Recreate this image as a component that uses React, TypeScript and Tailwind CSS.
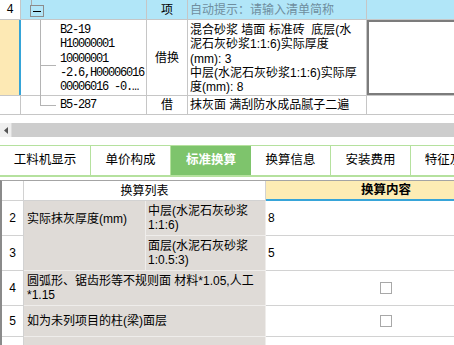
import React from 'react';

const sans = "font-['Liberation_Sans','Noto_Sans_CJK_SC',sans-serif]";
const mono = "font-['Liberation_Mono','Noto_Sans_CJK_SC',monospace]";

const codeLines = ['B2-19', 'H10000001', '10000001', '-2.6,H00006016', '00006016 -0.…'];
const descLines = [
  '混合砂浆 墙面 标准砖  底层(水',
  '泥石灰砂浆1:1:6)实际厚度',
  '(mm): 3',
  '中层(水泥石灰砂浆1:1:6)实际厚',
  '度(mm): 8',
];

function TopGrid() {
  return (
    <div>
      {/* row: 清单 item */}
      <div className="flex h-[20px] border-b border-[#c6c6c6]">
        <div className={`w-[21px] shrink-0 border-r border-[#c6c6c6] flex items-center justify-center ${mono}`}>
          4
        </div>
        <div className="w-[126px] shrink-0 bg-[#b1e6f8] border-r border-[#c6c6c6] relative">
          <span className="absolute left-[10px] top-0 h-[6px] w-px bg-[#a8a8a8]" />
          <span className="absolute left-[9px] top-[5px] w-[14px] h-[12px] border border-[#8c8c8c] flex items-center justify-center">
            <span className="w-[8px] h-px bg-black" />
          </span>
        </div>
        <div className="w-[41px] shrink-0 bg-[#b1e6f8] border-r border-[#c6c6c6] flex items-center justify-center">
          项
        </div>
        <div className="w-[179px] shrink-0 bg-[#b1e6f8] border-r border-[#c6c6c6] flex items-center pl-[2px] text-[#6f8e9e] whitespace-nowrap">
          自动提示：请输入清单简称
        </div>
        <div className="flex-1 bg-[#b1e6f8]" />
      </div>

      {/* row: B2-19 */}
      <div className="flex h-[76px] border-b border-[#c6c6c6]">
        <div className="w-[21px] shrink-0 bg-[#fde9b4] border-r-2 border-[#35a4d8]" />
        <div className="w-[126px] shrink-0 border-r border-[#c6c6c6] relative">
          <span className="absolute left-[19px] top-0 bottom-[-1px] w-px bg-[#b4b4b4]" />
          <span className="absolute left-[19px] top-[45px] w-[16px] h-px bg-[#b4b4b4]" />
          <div className={`pl-[39px] pt-[3px] leading-[14.3px] tracking-[-1.2px] whitespace-nowrap ${mono}`}>
            {codeLines.map((l) => (
              <div key={l}>{l}</div>
            ))}
          </div>
        </div>
        <div className="w-[41px] shrink-0 border-r border-[#c6c6c6] flex items-center justify-center">
          借换
        </div>
        <div className="w-[179px] shrink-0 border-r border-[#c6c6c6] pl-[2px] pt-[3px] leading-[14.3px] whitespace-pre overflow-hidden">
          {descLines.map((l) => (
            <div key={l}>{l}</div>
          ))}
        </div>
        <div className="flex-1 border-2 border-r-0 border-[#7c7c7c]" />
      </div>

      {/* row: B5-287 */}
      <div className="flex h-[19px] border-b border-[#c6c6c6]">
        <div className="w-[21px] shrink-0 border-r border-[#c6c6c6]" />
        <div className="w-[126px] shrink-0 border-r border-[#c6c6c6] relative">
          <span className="absolute left-[19px] top-0 h-[10px] w-px bg-[#b4b4b4]" />
          <span className="absolute left-[19px] top-[9px] w-[16px] h-px bg-[#b4b4b4]" />
          <div className={`pl-[39px] h-full flex items-center tracking-[-1.2px] ${mono}`}>B5-287</div>
        </div>
        <div className="w-[41px] shrink-0 border-r border-[#c6c6c6] flex items-center justify-center">
          借
        </div>
        <div className="w-[179px] shrink-0 border-r border-[#c6c6c6] flex items-center pl-[2px] whitespace-nowrap">
          抹灰面 满刮防水成品腻子二遍
        </div>
        <div className="flex-1" />
      </div>
    </div>
  );
}

function ScrollBar() {
  return (
    <div className="h-[30px] pt-[8px]">
      <div className="flex h-[14px] bg-[#cdcdcd]">
        <div className="w-[12px] bg-[#efefef] border-r border-[#dcdcdc] flex items-center justify-center">
          <svg width="4" height="7" viewBox="0 0 4 7">
            <path d="M4 0 L0 3.5 L4 7 Z" fill="#555" />
          </svg>
        </div>
      </div>
    </div>
  );
}

const tabs = [
  { label: '工料机显示', w: 'w-[91px]', active: false },
  { label: '单价构成', w: 'w-[80px]', active: false },
  { label: '标准换算', w: 'w-[80px]', active: true },
  { label: '换算信息', w: 'w-[80px]', active: false },
  { label: '安装费用', w: 'w-[80px]', active: false },
  { label: '特征及内容', w: 'w-[91px]', active: false },
];

function Tabs() {
  return (
    <div className="flex h-[32px] border-t border-b-2 border-[#b5e19e]">
      {tabs.map((t) => (
        <div
          key={t.label}
          className={`${t.w} shrink-0 flex items-center justify-center text-[12.5px] whitespace-nowrap ${
            t.active ? 'bg-[#7ec46c] text-white font-bold' : 'border-r border-[#b5e19e]'
          }`}
        >
          {t.label}
        </div>
      ))}
    </div>
  );
}

function Checkbox() {
  return <span className="w-[12px] h-[12px] border border-[#a8a8a8] bg-white" />;
}

function ConvertTable() {
  const num = 'border-r border-b border-[#d2d2d2] flex items-center justify-center';
  const gray = 'bg-[#dfdbd7] border-r border-b border-[#efedeb]';
  const val = 'border-b border-[#d2d2d2] flex items-center';
  return (
    <div className="grid grid-cols-[22px_122px_120px_240px] grid-rows-[20px_35px_35px_35px_31px_30px] border-t border-l-2 border-t-[#a4a4a4] border-l-[#8a8a8a]">
      {/* header */}
      <div className={num} />
      <div className="col-span-2 border-r border-b border-[#d2d2d2] flex items-center justify-center">换算列表</div>
      <div className="bg-[#fdecb4] border-b-2 border-[#37a5d9] flex items-center justify-center font-bold text-[12.5px]">
        换算内容
      </div>

      {/* 2 */}
      <div className={num}>2</div>
      <div className={`${gray} row-span-2 pl-[3px] pt-[9px] whitespace-nowrap`}>实际抹灰厚度(mm)</div>
      <div className={`${gray} flex items-center pl-[2px] leading-[14px] whitespace-nowrap`}>
        <div>
          中层(水泥石灰砂浆
          <br />
          1:1:6)
        </div>
      </div>
      <div className={`${val} pl-[2px]`}>8</div>

      {/* 3 */}
      <div className={num}>3</div>
      <div className={`${gray} flex items-center pl-[2px] leading-[14px] whitespace-nowrap`}>
        <div>
          面层(水泥石灰砂浆
          <br />
          1:0.5:3)
        </div>
      </div>
      <div className={`${val} pl-[2px]`}>5</div>

      {/* 4 */}
      <div className={num}>4</div>
      <div className={`${gray} col-span-2 flex items-center pl-[3px] leading-[14px] whitespace-nowrap`}>
        <div>
          圆弧形、锯齿形等不规则面 材料*1.05,人工
          <br />
          *1.15
        </div>
      </div>
      <div className={`${val} justify-center`}>
        <Checkbox />
      </div>

      {/* 5 */}
      <div className={num}>5</div>
      <div className={`${gray} col-span-2 flex items-center pl-[3px] whitespace-nowrap`}>如为未列项目的柱(梁)面层</div>
      <div className={`${val} justify-center`}>
        <Checkbox />
      </div>

      {/* 6 */}
      <div className={num} />
      <div className={`${gray} col-span-2`} />
      <div className={val} />
    </div>
  );
}

export default function App() {
  return (
    <div className={`w-[454px] h-[345px] overflow-hidden bg-white text-[12px] text-black ${sans}`}>
      <TopGrid />
      <ScrollBar />
      <Tabs />
      <div className="h-[3px]" />
      <ConvertTable />
    </div>
  );
}
